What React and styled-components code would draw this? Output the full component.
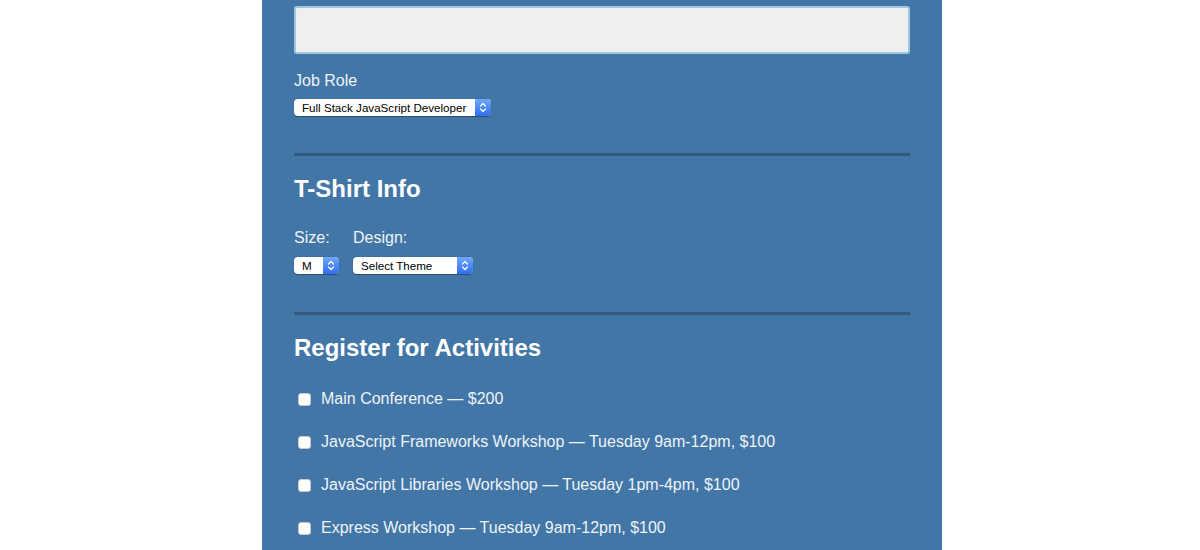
import React from "react";
import styled, { createGlobalStyle } from "styled-components";

const Global = createGlobalStyle`
  html, body { margin: 0; padding: 0; background: #ffffff; overflow: hidden; }
  body { font-family: "Liberation Sans", Arial, Helvetica, sans-serif; }
`;

const Page = styled.div`
  display: flex;
  justify-content: center;
  padding-left: 4px;
`;

const Panel = styled.form`
  width: 680px;
  height: 550px;
  overflow: hidden;
  box-sizing: border-box;
  padding: 6px 32px 0;
  background: #4276a6;
`;

const TextArea = styled.textarea`
  display: block;
  width: 100%;
  height: 48px;
  box-sizing: border-box;
  margin: 0;
  border: 2px solid #9fc6e3;
  border-radius: 3px;
  background: #efefef;
  resize: none;
  outline: none;
`;

const Label = styled.label`
  display: block;
  font-size: 16px;
  line-height: 18px;
  color: #eef3f8;
  margin-top: ${(p) => p.$mt || 0}px;
  margin-bottom: ${(p) => p.$mb || 9}px;
`;

const SelectBox = styled.div`
  display: flex;
  width: ${(p) => p.$w}px;
  height: 17px;
  border-radius: 4px;
  background: #ffffff;
  box-shadow: 0 0.5px 1px rgba(0, 0, 0, 0.35);
  overflow: hidden;
`;

const NativeSelect = styled.select`
  appearance: none;
  -webkit-appearance: none;
  flex: 1;
  min-width: 0;
  border: none;
  background: transparent;
  margin: 0;
  padding: 0 0 0 8px;
  font-family: "Liberation Sans", Arial, sans-serif;
  font-size: 11.6px;
  color: #000;
  outline: none;
`;

const Stepper = styled.span`
  flex: 0 0 16px;
  display: flex;
  align-items: center;
  justify-content: center;
  background: linear-gradient(#6ea8fb, #2f6ef0);
`;

const Rule = styled.hr`
  height: 3px;
  border: none;
  margin: ${(p) => p.$mt}px 0 0;
  background: #34597d;
`;

const Heading = styled.h2`
  margin: ${(p) => p.$mt}px 0 0;
  font-size: 24px;
  line-height: 27px;
  font-weight: bold;
  color: #ffffff;
`;

const ShirtRow = styled.div`
  display: flex;
  gap: 14px;
  margin-top: 27px;
`;

const Field = styled.div`
  display: flex;
  flex-direction: column;
`;

const Activities = styled.div`
  display: flex;
  flex-direction: column;
  margin-top: 16px;
`;

const Row = styled.label`
  display: flex;
  align-items: center;
  height: 43px;
  padding-left: 4px;
  font-size: 16px;
  line-height: 18px;
  color: #eef3f8;
`;

const Check = styled.input`
  appearance: none;
  -webkit-appearance: none;
  width: 13px;
  height: 13px;
  margin: 1px 10px 0 0;
  box-sizing: border-box;
  border: 1px solid #c9c9c9;
  border-radius: 3px;
  background: #ffffff;
`;

const Chevrons = () => (
  <svg width="8" height="11" viewBox="0 0 8 11" fill="none">
    <path d="M1.5 4 L4 1.5 L6.5 4" stroke="#fff" strokeWidth="1.2" strokeLinecap="round" strokeLinejoin="round" />
    <path d="M1.5 7 L4 9.5 L6.5 7" stroke="#fff" strokeWidth="1.2" strokeLinecap="round" strokeLinejoin="round" />
  </svg>
);

const Select = ({ width, options }) => (
  <SelectBox $w={width}>
    <NativeSelect>
      {options.map((o) => (
        <option key={o}>{o}</option>
      ))}
    </NativeSelect>
    <Stepper>
      <Chevrons />
    </Stepper>
  </SelectBox>
);

const activities = [
  "Main Conference — $200",
  "JavaScript Frameworks Workshop — Tuesday 9am-12pm, $100",
  "JavaScript Libraries Workshop — Tuesday 1pm-4pm, $100",
  "Express Workshop — Tuesday 9am-12pm, $100",
];

export default function App() {
  return (
    <Page>
      <Global />
      <Panel onSubmit={(e) => e.preventDefault()}>
        <TextArea />
        <Label $mt={18}>Job Role</Label>
        <Select width={197} options={["Full Stack JavaScript Developer", "Front End Developer", "Back End Developer", "Other"]} />
        <Rule $mt={37} />
        <Heading $mt={19}>T-Shirt Info</Heading>
        <ShirtRow>
          <Field>
            <Label $mb={10}>Size:</Label>
            <Select width={45} options={["M", "S", "L", "XL"]} />
          </Field>
          <Field>
            <Label $mb={10}>Design:</Label>
            <Select width={120} options={["Select Theme", "Theme - JS Puns", "Theme - I ♥ JS"]} />
          </Field>
        </ShirtRow>
        <Rule $mt={38} />
        <Heading $mt={19}>Register for Activities</Heading>
        <Activities>
          {activities.map((a) => (
            <Row key={a}>
              <Check type="checkbox" />
              {a}
            </Row>
          ))}
        </Activities>
      </Panel>
    </Page>
  );
}
